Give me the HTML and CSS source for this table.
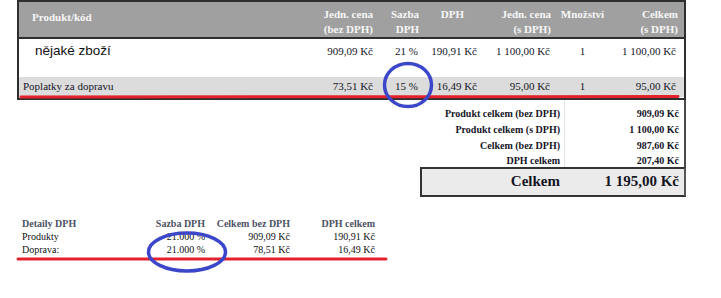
FILE: index.html
```html
<!DOCTYPE html>
<html lang="cs">
<head>
<meta charset="utf-8">
<title>Objednávka</title>
<link rel="stylesheet" href="styles.css">
</head>
<body>
<div class="page">
  <div class="items">
    <table class="items-table">
      <colgroup>
        <col class="c-name"><col class="c-unit"><col class="c-rate"><col class="c-vat"><col class="c-unit2"><col class="c-qty"><col class="c-total">
      </colgroup>
      <thead>
        <tr>
          <th class="name">Produkt/kód</th>
          <th>Jedn. cena<br>(bez DPH)</th>
          <th>Sazba<br>DPH</th>
          <th class="vat-h">DPH</th>
          <th>Jedn. cena<br>(s DPH)</th>
          <th class="qty">Množství</th>
          <th>Celkem<br>(s DPH)</th>
        </tr>
      </thead>
      <tbody>
        <tr class="product">
          <td class="name">nějaké zboží</td>
          <td>909,09 Kč</td>
          <td>21 %</td>
          <td>190,91 Kč</td>
          <td>1 100,00 Kč</td>
          <td class="qty">1</td>
          <td>1 100,00 Kč</td>
        </tr>
        <tr class="shipping">
          <td class="name">Poplatky za dopravu</td>
          <td>73,51 Kč</td>
          <td>15 %</td>
          <td>16,49 Kč</td>
          <td>95,00 Kč</td>
          <td class="qty">1</td>
          <td>95,00 Kč</td>
        </tr>
      </tbody>
    </table>
  </div>

  <div class="summary">
    <div class="sum-rows">
      <div class="sum-row"><span class="lbl">Produkt celkem (bez DPH)</span><span class="val">909,09 Kč</span></div>
      <div class="sum-row"><span class="lbl">Produkt celkem (s DPH)</span><span class="val">1 100,00 Kč</span></div>
      <div class="sum-row"><span class="lbl">Celkem (bez DPH)</span><span class="val">987,60 Kč</span></div>
      <div class="sum-row last"><span class="lbl">DPH celkem</span><span class="val">207,40 Kč</span></div>
    </div>
    <div class="grand"><span class="lbl">Celkem</span><span class="val">1 195,00 Kč</span></div>
  </div>

  <div class="details">
    <div class="d-row d-head"><span class="d-name">Detaily DPH</span><span>Sazba DPH</span><span>Celkem bez DPH</span><span>DPH celkem</span></div>
    <div class="d-row"><span class="d-name">Produkty</span><span>21.000 %</span><span>909,09 Kč</span><span>190,91 Kč</span></div>
    <div class="d-row"><span class="d-name">Doprava:</span><span>21.000 %</span><span>78,51 Kč</span><span>16,49 Kč</span></div>
  </div>

  <svg class="annot" width="721" height="298" viewBox="0 0 721 298" aria-hidden="true">
    <line x1="21" y1="97" x2="678" y2="96.5" stroke="#e3222c" stroke-width="3" stroke-linecap="round"/>
    <ellipse cx="408" cy="85" rx="23.5" ry="21.5" fill="none" stroke="#3c46c8" stroke-width="3.5"/>
    <line x1="18" y1="259" x2="386" y2="259" stroke="#e3222c" stroke-width="3" stroke-linecap="round"/>
    <ellipse cx="187" cy="252" rx="38.5" ry="19" fill="none" stroke="#3c46c8" stroke-width="3.5"/>
  </svg>
</div>
</body>
</html>
```

FILE: styles.css
```css
* { box-sizing: border-box; }
html, body { margin: 0; padding: 0; background: #fff; }
body {
  font-family: "Liberation Serif", "Times New Roman", serif;
  font-size: 11px;
  color: #15151f;
}
.page { position: relative; width: 721px; height: 298px; overflow: hidden; }

.items {
  margin-left: 17px;
  width: 669px;
  border: 2px solid #2e2e2e;
}
.items-table {
  width: 665px;
  border-collapse: collapse;
  table-layout: fixed;
}
.c-name { width: 302px; }
.c-unit { width: 56px; }
.c-rate { width: 46px; }
.c-vat { width: 58px; }
.c-unit2 { width: 74px; }
.c-qty { width: 55px; }
.c-total { width: 74px; }

.items-table th {
  background: #a0a0a0;
  color: #f7f7f7;
  font-weight: bold;
  font-size: 11px;
  line-height: 15px;
  text-align: right;
  vertical-align: top;
  padding: 5px 4px 0 0;
  height: 36px;
  border-bottom: 2px solid #2e2e2e;
  white-space: nowrap;
}
.items-table th.name { text-align: left; padding-left: 13px; padding-top: 8px; }
.items-table th.vat-h { text-align: right; padding-right: 17px; }
.items-table th.qty { text-align: center; padding-right: 0; }
.items-table th:last-child { padding-right: 6px; }

.items-table td {
  text-align: right;
  padding: 0 6px 0 0;
  white-space: nowrap;
  vertical-align: top;
}
.items-table td:nth-child(2) { padding-right: 4px; }
.items-table td:nth-child(3) { padding-right: 5px; }
.items-table td:nth-child(4) { padding-right: 4px; }
.items-table td:nth-child(5) { padding-right: 5px; }
.items-table td.qty { text-align: center; padding-right: 0; }
.items-table td:last-child { padding-right: 8px; }

.product td { height: 39px; padding-top: 5px; line-height: 15px; }
.product td.name {
  text-align: left;
  font-family: "Liberation Sans", Arial, sans-serif;
  font-size: 13.5px;
  color: #111;
  padding-left: 16px;
  padding-top: 4px;
}
.shipping td {
  background: #dcdcdc;
  height: 20px;
  line-height: 15px;
  padding-top: 2px;
  border-bottom: 1px solid #fff;
}
.shipping td.name { text-align: left; padding-left: 4px; }

.summary {
  margin-left: 420px;
  width: 266px;
}
.sum-rows {
  display: flex;
  flex-direction: column;
  padding-top: 6px;
  border-right: 2px solid #4a4a4a;
  background: linear-gradient(to right, transparent 144px, #e2e2e2 144px, #e2e2e2 145px, transparent 145px);
}
.sum-row {
  display: grid;
  grid-template-columns: 145px 119px;
  height: 16px;
  line-height: 16px;
  font-weight: bold;
  font-size: 10px;
}
.sum-row.last { height: 13px; line-height: 13px; }
.sum-row .lbl, .sum-row .val { text-align: right; padding-right: 5px; white-space: nowrap; }

.grand {
  display: grid;
  grid-template-columns: 143px 119px;
  height: 30px;
  align-items: center;
  background: #ebebeb;
  border: 2px solid #333;
  border-right: 2px solid #555;
  font-weight: bold;
  font-size: 15px;
}
.grand .lbl, .grand .val { text-align: right; padding-right: 5px; white-space: nowrap; }

.details {
  margin-top: 21px;
  margin-left: 22px;
  font-size: 10px;
}
.d-row {
  display: grid;
  grid-template-columns: 128px 55px 85px 85px;
  line-height: 13px;
  color: #111;
}
.d-row span { text-align: right; white-space: nowrap; }
.d-row .d-name { text-align: left; }
.d-head { font-weight: bold; color: #4c5264; line-height: 12px; }

.annot {
  position: absolute;
  left: 0;
  top: 0;
  pointer-events: none;
}
```
